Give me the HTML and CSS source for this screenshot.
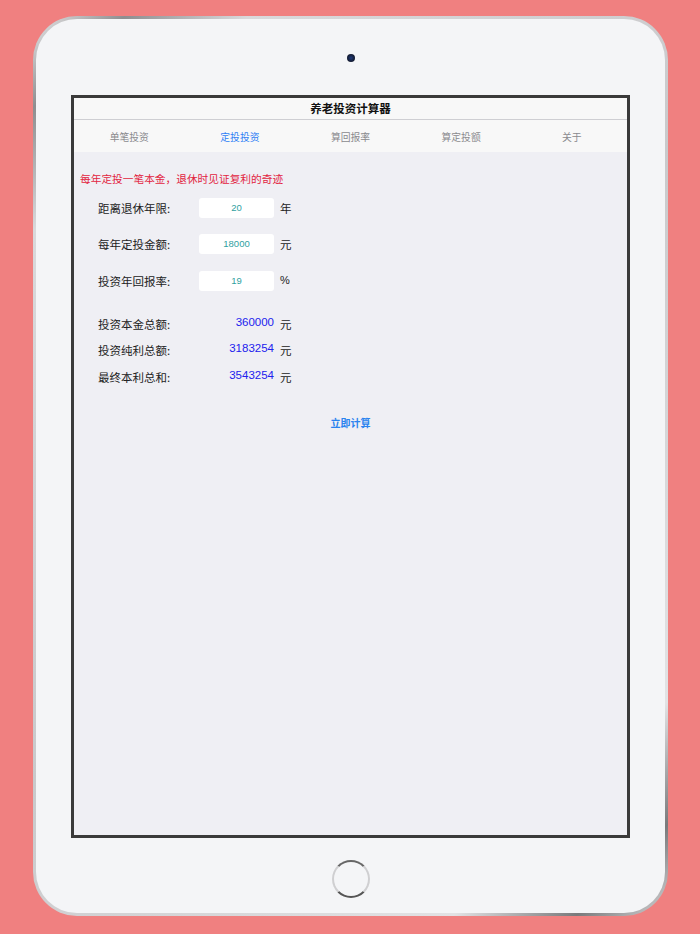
FILE: index.html
```html
<!DOCTYPE html>
<html lang="zh">
<head>
<meta charset="utf-8">
<title>养老投资计算器</title>
<link rel="stylesheet" href="styles.css">
</head>
<body>
<div class="device">
  <div class="body">
    <div class="camera"></div>
    <div class="screen">
      <div class="navbar">养老投资计算器</div>
      <div class="tabs">
        <div class="tab">单笔投资</div>
        <div class="tab active">定投投资</div>
        <div class="tab">算回报率</div>
        <div class="tab">算定投额</div>
        <div class="tab">关于</div>
      </div>
      <div class="content">
        <div class="intro">每年定投一笔本金，退休时见证复利的奇迹</div>
        <div class="form">
          <div class="row input-row">
            <span class="label">距离退休年限:</span>
            <span class="field">20</span>
            <span class="unit">年</span>
          </div>
          <div class="row input-row">
            <span class="label">每年定投金额:</span>
            <span class="field">18000</span>
            <span class="unit">元</span>
          </div>
          <div class="row input-row">
            <span class="label">投资年回报率:</span>
            <span class="field">19</span>
            <span class="unit pct">%</span>
          </div>
        </div>
        <div class="results">
          <div class="row result-row">
            <span class="label">投资本金总额:</span>
            <span class="value">360000</span>
            <span class="unit">元</span>
          </div>
          <div class="row result-row">
            <span class="label">投资纯利总额:</span>
            <span class="value">3183254</span>
            <span class="unit">元</span>
          </div>
          <div class="row result-row">
            <span class="label">最终本利总和:</span>
            <span class="value">3543254</span>
            <span class="unit">元</span>
          </div>
        </div>
        <div class="action">立即计算</div>
      </div>
    </div>
    <div class="home"></div>
  </div>
</div>
</body>
</html>
```

FILE: styles.css
```css
html, body {
  margin: 0;
  padding: 0;
}
body {
  background: #f08080;
  width: 700px;
  height: 934px;
  overflow: hidden;
  font-family: "Noto Sans CJK SC", "Noto Sans", sans-serif;
}
.device {
  margin: 16px 0 0 33px;
  width: 635px;
  height: 900px;
  box-sizing: border-box;
  padding: 3px;
  border-radius: 44px;
  background: linear-gradient(135deg, #e9e9ea 0%, #8e8e90 6%, #d9d9db 14%, #c9c9cb 50%, #e2e2e4 86%, #7a7a7c 94%, #d4d4d6 100%);
}
.body {
  height: 100%;
  border-radius: 41px;
  background: #f4f5f7;
  display: flex;
  flex-direction: column;
  align-items: center;
}
.camera {
  width: 8px;
  height: 8px;
  border-radius: 50%;
  margin-top: 35px;
  background: radial-gradient(circle at 50% 50%, #1f3a7a 0%, #15203d 55%, #0c0f18 100%);
}
.screen {
  margin-top: 33px;
  width: 559px;
  height: 743px;
  box-sizing: border-box;
  border: 3px solid #3a3a3a;
  display: flex;
  flex-direction: column;
  background: #efeff4;
}
.navbar {
  height: 21px;
  line-height: 20px;
  text-align: center;
  font-size: 11.5px;
  font-weight: bold;
  color: #111;
  background: #f8f8f8;
  border-bottom: 1px solid #cfcfd3;
}
.tabs {
  height: 32px;
  display: grid;
  grid-template-columns: repeat(5, 1fr);
  background: #f8f8f8;
}
.tab {
  text-align: center;
  line-height: 34px;
  font-size: 9.8px;
  color: #8a8a8e;
}
.tab.active {
  color: #2f7ff5;
}
.content {
  flex: 1;
  padding: 19px 0 0 6px;
}
.intro {
  color: #e2243f;
  font-size: 10.7px;
  line-height: 16px;
}
.form {
  margin-top: 11px;
  display: flex;
  flex-direction: column;
  gap: 15.5px;
}
.input-row:nth-child(3) {
  margin-top: 1.5px;
}
.row {
  display: grid;
  grid-template-columns: 101px 75px auto;
  align-items: center;
  padding-left: 18px;
}
.label {
  font-size: 11.5px;
  color: #222;
}
.unit {
  font-size: 11.5px;
  color: #222;
  padding-left: 6px;
}
.unit.pct {
  font-family: "Liberation Sans", sans-serif;
  font-size: 11px;
  position: relative;
  top: -1px;
}
.field {
  height: 20px;
  line-height: 20px;
  background: #ffffff;
  border-radius: 3px;
  text-align: center;
  font-family: "Liberation Sans", sans-serif;
  font-size: 9.5px;
  color: #2f9f9f;
}
.results {
  margin-top: 25px;
  display: flex;
  flex-direction: column;
  gap: 9px;
}
.result-row {
  height: 17px;
}
.result-row:nth-child(2) {
  margin-bottom: 1px;
}
.value {
  text-align: right;
  font-family: "Liberation Sans", sans-serif;
  font-size: 11.5px;
  color: #2121ee;
  position: relative;
  top: -2px;
}
.action {
  margin-top: 29px;
  text-align: center;
  padding-right: 6px;
  font-size: 10px;
  font-weight: bold;
  color: #2a83ef;
}
.home {
  margin-top: 22px;
  width: 34px;
  height: 34px;
  border-radius: 50%;
  border: 2px solid #9a9a9c;
  border-top-color: #666;
  border-left-color: #cfcfd1;
  border-right-color: #cfcfd1;
  border-bottom-color: #555;
}
```
